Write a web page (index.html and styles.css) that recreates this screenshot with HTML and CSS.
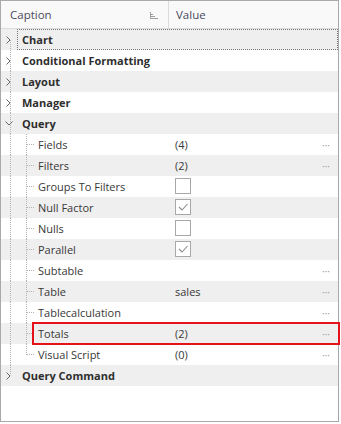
FILE: index.html
```html
<!DOCTYPE html>
<html>
<head>
<meta charset="utf-8">
<link rel="stylesheet" href="styles.css">
</head>
<body>
<div class="grid">
  <div class="header">
    <div class="hcell hcap">
      <span>Caption</span>
      <svg class="sort" width="8" height="7" viewBox="0 0 8 7"><path d="M0.5 0V7M0.5 2.5H3M0.5 4.5H5M0.5 6.5H8" stroke="#a0a0a0" stroke-width="1" fill="none"/></svg>
    </div>
    <div class="hcell hval">Value</div>
  </div>

  <div class="row alt focus top"><div class="cap"><span class="g root first"><svg class="chev" width="5" height="8" viewBox="0 0 5 8"><path d="M0.5 0.5L4 4L0.5 7.5" stroke="#666" fill="none"/></svg></span><span class="t b">Chart</span></div><div class="val"></div></div>
  <div class="row top"><div class="cap"><span class="g root"><svg class="chev" width="5" height="8" viewBox="0 0 5 8"><path d="M0.5 0.5L4 4L0.5 7.5" stroke="#666" fill="none"/></svg></span><span class="t b">Conditional Formatting</span></div><div class="val"></div></div>
  <div class="row alt top"><div class="cap"><span class="g root"><svg class="chev" width="5" height="8" viewBox="0 0 5 8"><path d="M0.5 0.5L4 4L0.5 7.5" stroke="#666" fill="none"/></svg></span><span class="t b">Layout</span></div><div class="val"></div></div>
  <div class="row top"><div class="cap"><span class="g root"><svg class="chev" width="5" height="8" viewBox="0 0 5 8"><path d="M0.5 0.5L4 4L0.5 7.5" stroke="#666" fill="none"/></svg></span><span class="t b">Manager</span></div><div class="val"></div></div>
  <div class="row alt top"><div class="cap"><span class="g root"><svg class="chev open" width="8" height="5" viewBox="0 0 8 5"><path d="M0.5 0.5L4 4L7.5 0.5" stroke="#666" fill="none"/></svg></span><span class="t b">Query</span></div><div class="val"></div></div>

  <div class="row child"><div class="cap"><span class="g root"></span><span class="g sub"></span><span class="t">Fields</span></div><div class="val"><span>(4)</span><span class="dots">···</span></div></div>
  <div class="row alt child"><div class="cap"><span class="g root"></span><span class="g sub"></span><span class="t">Filters</span></div><div class="val"><span>(2)</span><span class="dots">···</span></div></div>
  <div class="row child"><div class="cap"><span class="g root"></span><span class="g sub"></span><span class="t">Groups To Filters</span></div><div class="val"><span class="box"></span></div></div>
  <div class="row alt child"><div class="cap"><span class="g root"></span><span class="g sub"></span><span class="t">Null Factor</span></div><div class="val"><span class="box"><svg width="14" height="14" viewBox="0 0 14 14"><path d="M3 7L6 10L11.5 4" stroke="#8a8a8a" stroke-width="1.1" fill="none"/></svg></span></div></div>
  <div class="row child"><div class="cap"><span class="g root"></span><span class="g sub"></span><span class="t">Nulls</span></div><div class="val"><span class="box"></span></div></div>
  <div class="row alt child"><div class="cap"><span class="g root"></span><span class="g sub"></span><span class="t">Parallel</span></div><div class="val"><span class="box"><svg width="14" height="14" viewBox="0 0 14 14"><path d="M3 7L6 10L11.5 4" stroke="#8a8a8a" stroke-width="1.1" fill="none"/></svg></span></div></div>
  <div class="row child"><div class="cap"><span class="g root"></span><span class="g sub"></span><span class="t">Subtable</span></div><div class="val"><span></span><span class="dots">···</span></div></div>
  <div class="row alt child"><div class="cap"><span class="g root"></span><span class="g sub"></span><span class="t">Table</span></div><div class="val"><span>sales</span><span class="dots">···</span></div></div>
  <div class="row child"><div class="cap"><span class="g root"></span><span class="g sub"></span><span class="t">Tablecalculation</span></div><div class="val"><span></span><span class="dots">···</span></div></div>
  <div class="row alt child marked"><div class="cap"><span class="g root"></span><span class="g sub"></span><span class="t">Totals</span></div><div class="val"><span>(2)</span><span class="dots">···</span></div></div>
  <div class="row child"><div class="cap"><span class="g root"></span><span class="g sub last"></span><span class="t">Visual Script</span></div><div class="val"><span>(0)</span><span class="dots">···</span></div></div>
  <div class="row alt top"><div class="cap"><span class="g root last"><svg class="chev" width="5" height="8" viewBox="0 0 5 8"><path d="M0.5 0.5L4 4L0.5 7.5" stroke="#666" fill="none"/></svg></span><span class="t b">Query Command</span></div><div class="val"></div></div>
</div>
</body>
</html>
```
FILE: styles.css
```css
html, body {
  margin: 0;
  padding: 0;
  background: #ffffff;
}
body {
  font-family: "Open Sans", "Noto Sans", sans-serif;
  font-size: 11px;
  color: #383838;
}
.grid {
  width: 337px;
  height: 420px;
  border: 1px solid #a9a9a9;
  background: #fff;
}
.header {
  display: grid;
  grid-template-columns: 168px 1fr;
  height: 27px;
  border-bottom: 1px solid #dcdcdc;
  background: #f9f9f9;
}
.hcell {
  display: flex;
  align-items: center;
  font-size: 11.5px;
  color: #4a4a5a;
}
.hcap {
  justify-content: space-between;
  padding: 0 10px 0 9px;
  border-right: 1px solid #dcdcdc;
}
.hval {
  padding-left: 7px;
}
.sort {
  margin-top: 2px;
}
.row {
  position: relative;
  display: grid;
  grid-template-columns: 169px 1fr;
  height: 21px;
  background: #fff;
}
.row.alt {
  background: #efefef;
}
.cap {
  display: flex;
  align-items: stretch;
  min-width: 0;
}
.g {
  flex: none;
  display: flex;
  align-items: center;
  background-repeat: no-repeat;
}
.g.root {
  width: 17px;
  background-image: repeating-linear-gradient(to bottom, #b4b4b4 0 1px, transparent 1px 2px);
  background-size: 1px 100%;
  background-position: 9px 0;
}
.g.root.first {
  background-size: 1px 50%;
  background-position: 9px 100%;
}
.g.root.last {
  background-size: 1px 50%;
  background-position: 9px 0;
}
.g.sub {
  width: 20px;
  background-image:
    repeating-linear-gradient(to bottom, #b4b4b4 0 1px, transparent 1px 2px),
    repeating-linear-gradient(to right, #b4b4b4 0 1px, transparent 1px 2px);
  background-size: 1px 100%, 7px 1px;
  background-position: 8px 0, 9px 10px;
}
.g.sub.last {
  background-size: 1px 11px, 7px 1px;
}
.chev {
  margin-left: 5px;
}
.chev.open {
  margin-left: 4px;
}
.t {
  display: flex;
  align-items: center;
  padding-left: 4px;
  white-space: nowrap;
}
.t.b {
  font-weight: 700;
  color: #2e2e2e;
}
.row.child .t {
  padding-left: 0;
}
.val {
  display: flex;
  align-items: center;
  justify-content: space-between;
  padding: 0 8px 0 5px;
}
.dots {
  color: #9a9a9a;
  font-size: 10px;
}
.box {
  width: 14px;
  height: 14px;
  border: 1px solid #a8a8a8;
  background: #fff;
  display: block;
  margin-top: -2px;
}
.box svg {
  display: block;
}
.row.focus::after {
  content: "";
  position: absolute;
  left: 16px;
  right: 0;
  top: 0;
  bottom: 0;
  border: 1px dotted #777;
}
.row.marked {
  z-index: 2;
}
.row.marked::after {
  content: "";
  position: absolute;
  left: 31px;
  right: -2px;
  top: -1px;
  bottom: -1px;
  border: 2px solid #e5121a;
}
```
